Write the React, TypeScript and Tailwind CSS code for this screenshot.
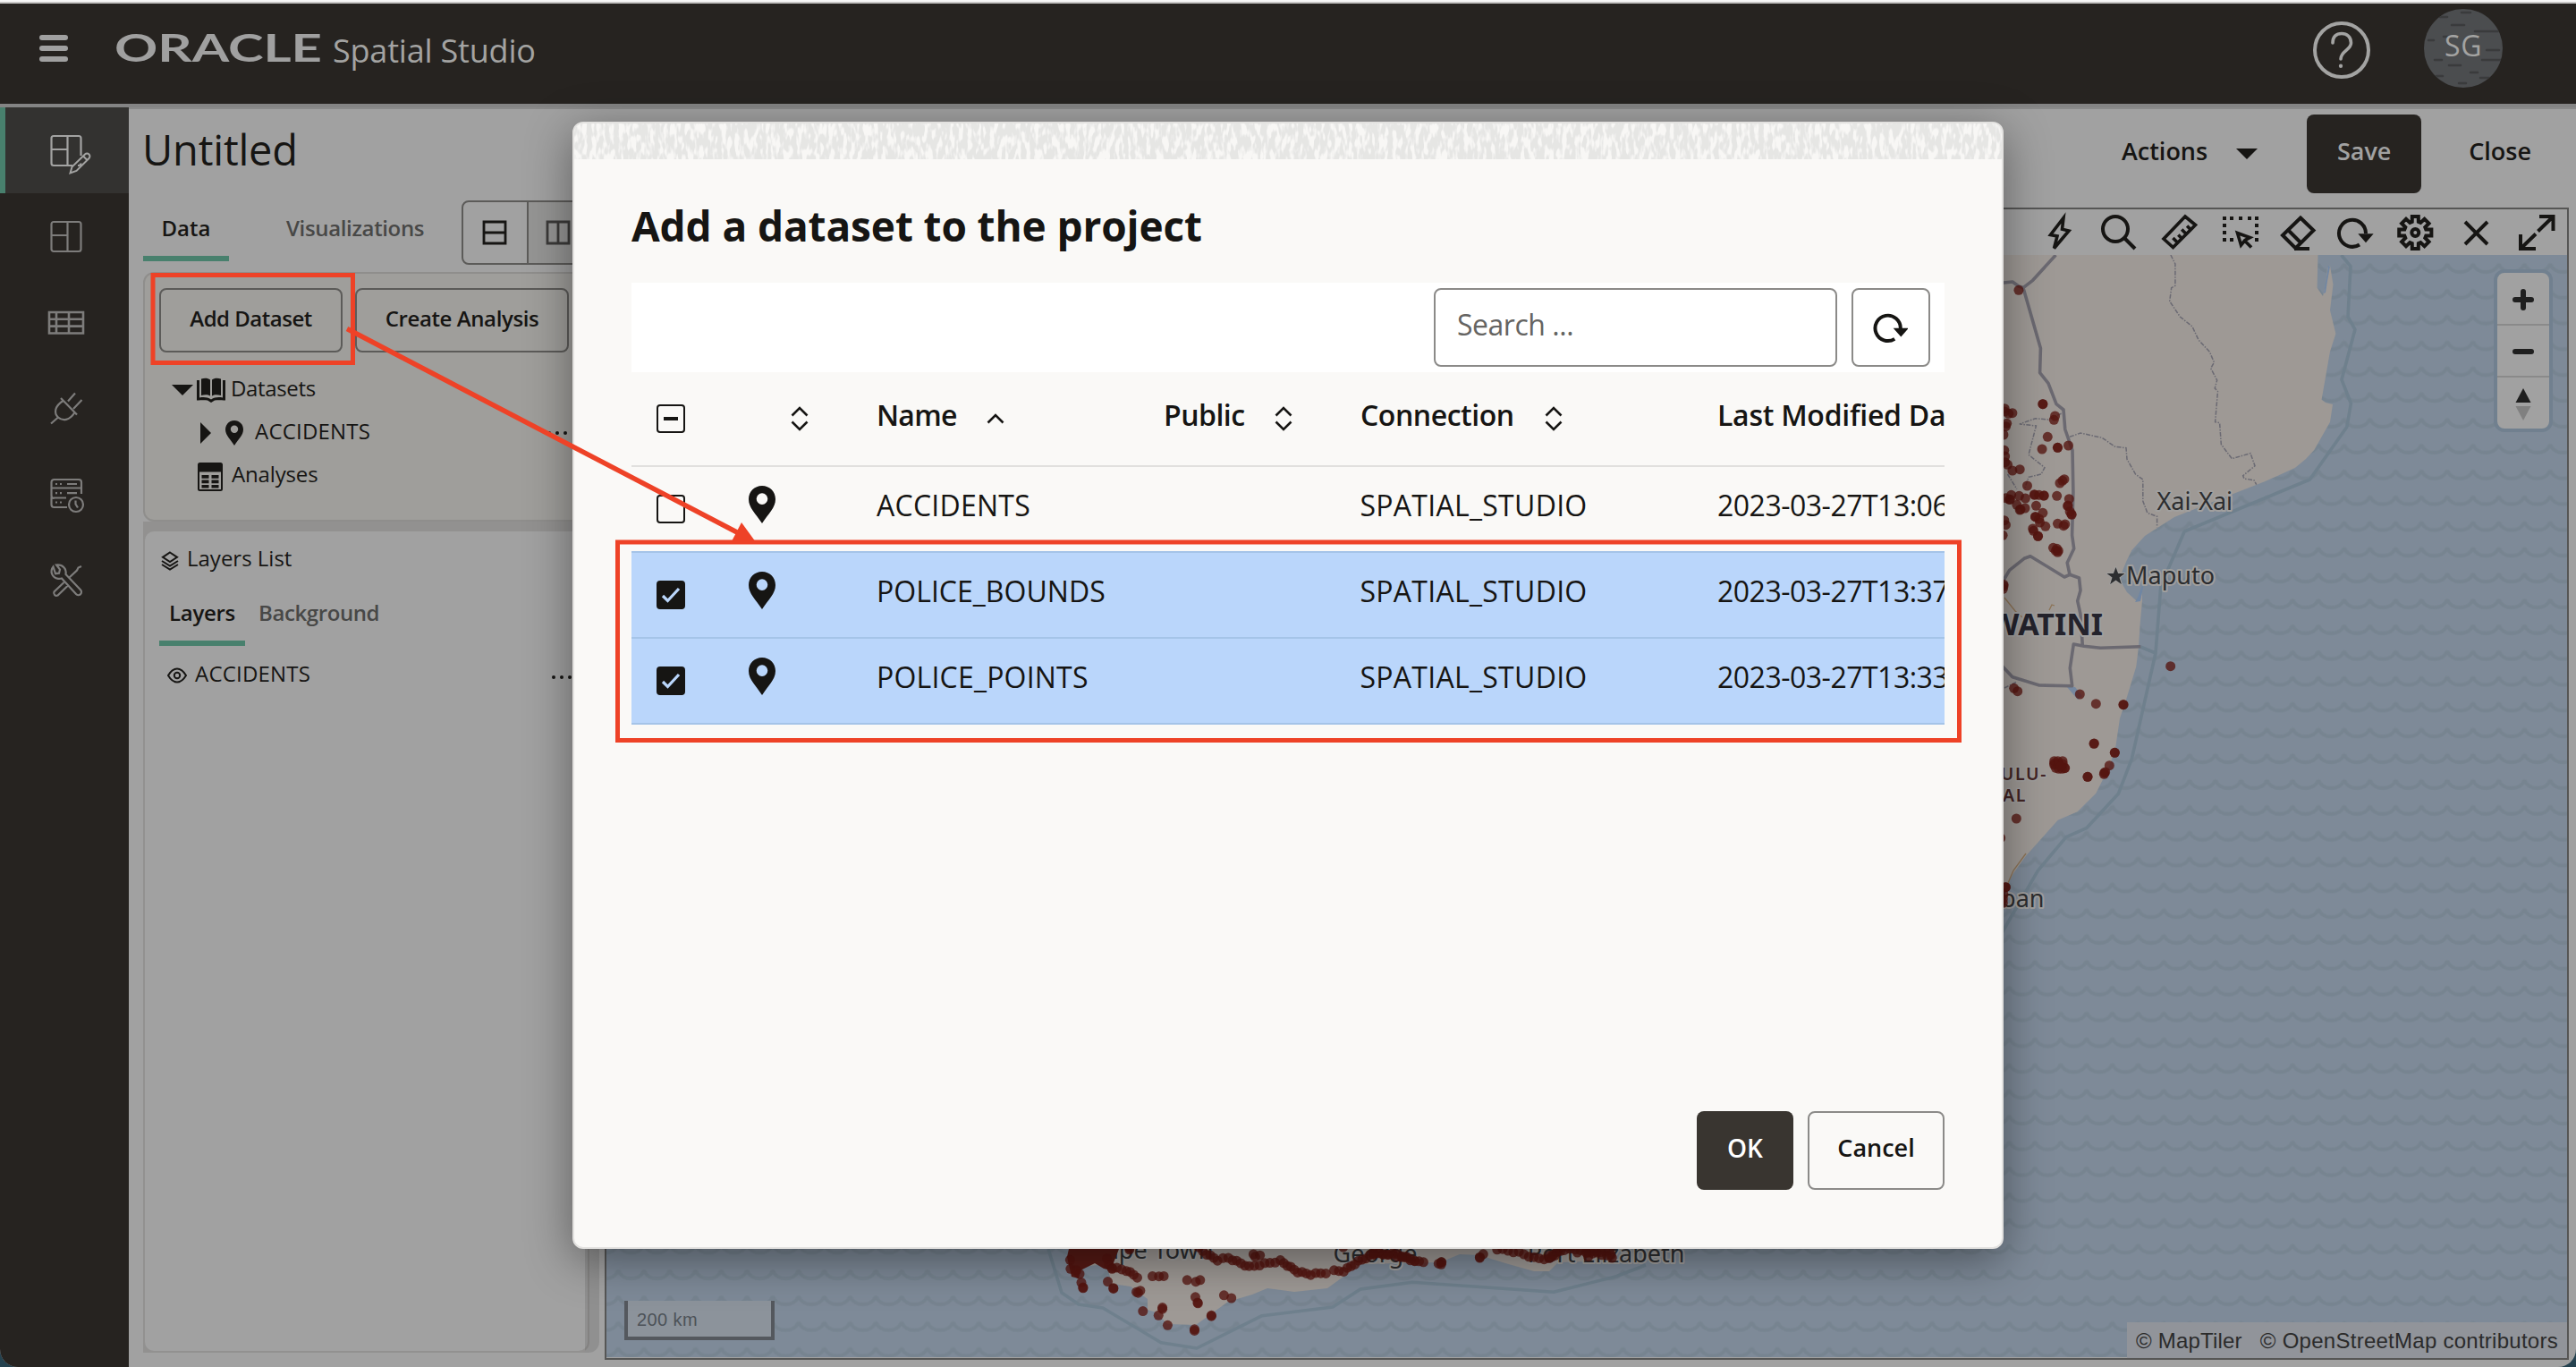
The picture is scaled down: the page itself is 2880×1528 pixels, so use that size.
import React from "react";
import type { ReactNode } from "react";

/* ---------- shared icons ---------- */

function Pin({ className }: { className: string }) {
  return (
    <svg viewBox="0 0 30 42" className={className} fill="currentColor">
      <path
        fillRule="evenodd"
        d="M15 0C6.5 0 0 6.6 0 15c0 9.500 7.500 15.500 15 27 7.500-11.500 15-17.500 15-27C30 6.600 23.500 0 15 0Zm0 8.300a6.200 6.200 0 1 1 0 12.600 6.200 6.200 0 0 1 0-12.600Z"
      />
    </svg>
  );
}

function Refresh({ className }: { className: string }) {
  return (
    <svg viewBox="0 0 40 36" className={className}>
      <path d="M25 30.500A15 15 0 1 1 32 18" fill="none" stroke="currentColor" strokeWidth="4.200" />
      <path d="M25 18.500h15L32.500 27Z" fill="currentColor" stroke="currentColor" strokeWidth="1.500" />
    </svg>
  );
}

function SortIcon() {
  return (
    <svg viewBox="0 0 20 28" className="h-[28px] w-[20px]" fill="none" stroke="currentColor" strokeWidth="2.600">
      <path d="M1.500 10.500 10 2l8.500 8.500M1.500 17.500 10 26l8.500-8.500" />
    </svg>
  );
}

/* ---------- side navigation ---------- */

function NavItem({ active, children }: { active?: boolean; children: ReactNode }) {
  return (
    <div
      className={
        active
          ? "flex h-24 items-center justify-center border-l-[6px] border-[#48806d] bg-[#333230] text-[#a3a3a2]"
          : "flex h-24 items-center justify-center border-l-[6px] border-transparent text-[#7d7c7b]"
      }
    >
      <svg viewBox="0 0 48 48" className="size-12 overflow-visible" fill="none" stroke="currentColor" strokeWidth="2.200">
        {children}
      </svg>
    </div>
  );
}

function SideNav() {
  return (
    <nav className="w-[144px] shrink-0 bg-[#262320]">
      <NavItem active>
        <path d="M39.500 30V10.500A2.500 2.500 0 0 0 37 8H9a2.500 2.500 0 0 0-2.500 2.500v28A2.500 2.500 0 0 0 9 41h21M36 41h1a2.500 2.500 0 0 0 2.500-2.500" />
        <path d="M24.500 8v33M6.500 23h18" />
        <path
          d="M27.500 49.500 29.500 42.500 44 28.500a3 3 0 0 1 4.500 4.500L34.500 47ZM42 30.500l4.500 4.500"
          strokeWidth="2"
        />
      </NavItem>
      <NavItem>
        <rect x="6.500" y="8" width="33" height="33" rx="2.500" />
        <path d="M24.500 8v33M6.500 23h18" />
      </NavItem>
      <NavItem>
        <path d="M4 13h38v23.500H4ZM4 20.800h38M4 28.600h38M12 13v23.500M26 13v23.500" strokeWidth="2.600" />
      </NavItem>
      <NavItem>
        <path d="M17 13 35 31.500M19.500 16C10 22 9 30 14 34.500c5 4.500 13 3.500 18.500-5.500M14 34.500 6 41.500M33 7.500l-8 9M40.500 15l-9.500 10" />
      </NavItem>
      <NavItem>
        <path d="M24 39H9.500a3 3 0 0 1-3-3v-7.500H23M40 24v-6.500H6.500V26a3 3 0 0 0 3 3M6.500 17.500V11a3 3 0 0 1 3-3H37a3 3 0 0 1 3 3v6.500M24 13h11M24 23.200h11" />
        <path d="M11 13h2M16 13h2M11 23.200h2M16 23.200h2M11 33.500h2M16 33.500h2" />
        <circle cx="34" cy="36" r="8" />
        <path d="M33.500 31.500v4l2.500 4" />
      </NavItem>
      <NavItem>
        <path d="M8.500 9.500C4.500 14.500 7 22 14 22.800c1.800.2 3 0 4-.300L34 40a3.400 3.400 0 0 0 5.200-4.500L22.500 18C23.500 12 19.500 6.800 12 7.500l4 5-1 4.200-4 .500ZM40 9l-3.500 1.500-1.500 3-9 8.500M20.500 27 9.500 37.500a3 3 0 0 0 4 4L25 30.500" />
      </NavItem>
    </nav>
  );
}

/* ---------- header ---------- */

function Header() {
  return (
    <header className="flex h-[116px] shrink-0 items-start border-b-4 border-[#848484] bg-[#262320] text-[#a3a3a2]">
      <div className="mt-[35px] ml-11 flex w-8 flex-col gap-[6px]">
        <span className="h-[6px] rounded-full bg-[#a0a0a0]" />
        <span className="h-[6px] rounded-full bg-[#a0a0a0]" />
        <span className="h-[6px] rounded-full bg-[#a0a0a0]" />
      </div>
      <svg viewBox="0 0 232 44" className="mt-[29px] ml-[52px] h-[44px] w-[232px] overflow-visible">
        <text
          x="0"
          y="36"
          textLength="232"
          lengthAdjust="spacingAndGlyphs"
          fill="#a0a0a0"
          className="font-['Lato'] text-[42px] font-bold"
        >
          ORACLE
        </text>
      </svg>
      <span className="mt-[27px] ml-[12px] text-[36px] leading-[52px] tracking-[-0.2px]">Spatial Studio</span>
      <div className="mt-5 ml-auto flex size-16 items-center justify-center rounded-full border-4 border-[#a3a3a2]">
        <svg viewBox="0 0 26 42" className="h-[42px] w-[26px]" fill="none" stroke="currentColor" strokeWidth="3.600" strokeLinecap="round">
          <path d="M3 13C3 6 7 2.500 13 2.500S23.500 6.500 23.500 13c0 8-11.500 9-11.500 18" />
          <path d="M12 38.500v.500" strokeWidth="4.200" />
        </svg>
      </div>
      <div className="relative mt-[6px] mr-[82px] ml-[60px] flex size-[88px] items-center justify-center overflow-hidden rounded-full bg-[#4b4d4f]">
        <svg viewBox="0 0 88 88" className="absolute inset-0" stroke="#3a3b3c" strokeWidth="2.500" strokeLinecap="round">
          <path d="M42 4h10M18 9h8M31 18h14M57 25h26M5 35h6M22 31h8M70 46h14M65 57h22M12 57h8M28 63h13M52 71h8M14 75h7M63 77h10M39 83h8" />
        </svg>
        <span className="relative pb-[7px] text-[32px] leading-none tracking-[0.500px]">SG</span>
      </div>
    </header>
  );
}

/* ---------- left column ---------- */

function Dots({ className }: { className: string }) {
  return (
    <span className={className}>
      <i className="size-1 rounded-full bg-[#161513]" />
      <i className="size-1 rounded-full bg-[#161513]" />
      <i className="size-1 rounded-full bg-[#161513]" />
    </span>
  );
}

function DataPanel() {
  return (
    <section className="h-[279px] w-[499px] rounded-xl border-2 border-[#8f8e8c] bg-[#9f9e9b]">
      <div className="mt-4 ml-4 flex gap-[14px] text-[24px] leading-8 font-semibold">
        <button className="flex h-[72px] w-[205px] items-center justify-center rounded-lg border-2 border-[#5c5b59] pb-[5px] tracking-[-0.500px]">
          Add Dataset
        </button>
        <button className="flex h-[72px] w-[239px] items-center justify-center rounded-lg border-2 border-[#5c5b59] pb-[5px] tracking-[-0.400px]">
          Create Analysis
        </button>
      </div>
      <ul className="mt-4 text-[24px] leading-[48px]">
        <li className="flex h-12 items-center pl-[30px]">
          <svg viewBox="0 0 24 12" className="mt-1 h-3 w-6" fill="currentColor">
            <path d="M0 0h24L12 12Z" />
          </svg>
          <svg viewBox="0 0 32 28" className="mt-1 ml-1 h-7 w-8">
            <path d="M5 1.500C9 0 12.500.5 15 2.500v18C12.500 19 9 19 5 20ZM27 1.500C23 0 19.500.5 17 2.500v18c2.500-1.500 6-1.500 10-.500ZM0 3h3v19.500c5-.8 9-.5 13 2 4-2.500 8-2.800 13-2V3h3v22.500c-6-.5-9-.5-12 0L16 28l-4-2.500c-3-.5-6-.5-12 0Z" fill="currentColor" />
          </svg>
          <span className="ml-[6px] -mt-[1px] tracking-[-0.350px]">Datasets</span>
        </li>
        <li className="flex h-12 items-center pl-[62px]">
          <svg viewBox="0 0 12 24" className="mt-1 h-6 w-3" fill="currentColor">
            <path d="M0 0v24L12 12Z" />
          </svg>
          <Pin className="mt-1 ml-4 h-7 w-5" />
          <span className="ml-[13px] -mt-[1px] tracking-[0.200px]">ACCIDENTS</span>
          <Dots className="mt-[3px] ml-auto mr-[23px] flex gap-[5px]" />
        </li>
        <li className="flex h-12 items-center pl-[59px]">
          <svg viewBox="0 0 28 32" className="mt-[5px] h-8 w-7">
            <rect x="1" y="1" width="26" height="30" rx="1.500" fill="none" stroke="currentColor" strokeWidth="2" />
            <path d="M1 1h26v9.500H1ZM4.500 14h8v3.800h-8ZM15.500 14h8v3.800h-8ZM4.500 19.500h8v3.800h-8ZM15.500 19.500h8v3.800h-8ZM4.500 25h8v3.500h-8ZM15.500 25h8v3.500h-8Z" fill="currentColor" />
          </svg>
          <span className="ml-[10px] -mt-[1px] tracking-[-0.150px]">Analyses</span>
        </li>
      </ul>
    </section>
  );
}

function LayersPanel() {
  return (
    <section className="h-[920px] w-[499px] rounded-xl border-2 border-[#929190] bg-[#a1a1a1] text-[24px]">
      <div className="flex h-[60px] items-center pl-[18px]">
        <svg viewBox="0 0 20 22" className="mt-[5px] h-[22px] w-5" fill="none" stroke="currentColor" strokeWidth="2">
          <path d="M10 1.500 18 6.800 10 12 2 6.800ZM1 11l9 5.500 9-5.500M1 15l9 5.500 9-5.500" />
        </svg>
        <span className="ml-[9px]">Layers List</span>
      </div>
      <div className="mt-[7px] ml-4 flex h-[61px] font-semibold">
        <div className="flex w-24 justify-center border-b-[6px] border-[#48806d] pt-[7px] leading-[34px] tracking-[-0.300px]">
          Layers
        </div>
        <div className="ml-[15px] pt-[7px] leading-[34px] tracking-[-0.400px] text-[#484847]">Background</div>
      </div>
      <div className="flex h-[62px] items-center pl-[25px]">
        <svg viewBox="0 0 22 18" className="mt-1 h-[18px] w-[22px]" fill="none" stroke="currentColor" strokeWidth="2">
          <path d="M1 9C4 4 7 1.500 11 1.500S18 4 21 9c-3 5-6 7.500-10 7.500S4 14 1 9Z" />
          <circle cx="11" cy="9" r="3.200" />
        </svg>
        <span className="ml-[9px] tracking-[0.200px]">ACCIDENTS</span>
        <Dots className="mt-2 ml-auto mr-[18px] flex gap-[5px]" />
      </div>
    </section>
  );
}

function LeftColumn() {
  return (
    <div className="w-[510px] shrink-0">
      <div className="flex h-[72px] text-[24px] font-semibold">
        <div className="flex h-[68px] w-24 justify-center border-b-[6px] border-[#48806d] pt-[14px] leading-[34px]">Data</div>
        <div className="ml-[64px] w-[156px] pt-[14px] leading-[34px] tracking-[-0.350px] text-[#484847]">Visualizations</div>
        <div className="ml-[40px] flex w-[148px] rounded-lg border-2 border-[#5c5b59]">
          <div className="flex w-[73px] items-center justify-center border-r-2 border-[#5c5b59]">
            <svg viewBox="0 0 28 28" className="mr-[2px] size-7" fill="none" stroke="currentColor" strokeWidth="2.800">
              <path d="M2 2h24v24H2ZM2 14h24" />
            </svg>
          </div>
          <div className="flex flex-1 items-center justify-center rounded-r-md bg-[#959594] text-[#3b3a39]">
            <svg viewBox="0 0 28 28" className="mr-[6px] size-7" fill="none" stroke="currentColor" strokeWidth="2.800">
              <path d="M2 2h24v24H2ZM14 2v24" />
            </svg>
          </div>
        </div>
      </div>
      <div className="mt-2 flex">
        <div className="w-[494px] bg-[#929190]">
          <div className="bg-[#a1a1a1]">
            <DataPanel />
          </div>
          <div className="h-[9px] bg-[#929190]" />
          <LayersPanel />
        </div>
        <div className="flex-1 rounded-br-xl bg-black/10" />
      </div>
    </div>
  );
}

/* ---------- map ---------- */

const NORTH_DOTS: [number, number][] = [
  [65, 283], [130, 665], [130, 665], [163, 705], [160, 718], [143, 775], [128, 816], [170, 811], [170, 811], [199, 804],
  [48, 695], [38, 697], [27, 680], [27, 690], [33, 730], [30, 740], [24, 768], [26, 820], [28, 840], [35, 868], [28, 860],
  [48, 888], [68, 884], [88, 939], [188, 917], [183, 922], [176, 930], [45, 970], [66, 973], [40, 985], [42, 985],
  [30, 980], [83, 981], [60, 1003], [70, 1018], [68, 1020], [82, 1014], [112, 1006], [107, 968], [108, 970], [133, 972],
  [133, 972], [120, 970], [168, 973], [201, 983], [197, 1007], [198, 1005], [203, 1025], [208, 1036], [207, 1034],
  [130, 1030], [110, 1043], [110, 1043], [120, 1050], [122, 1062], [137, 1075], [103, 1083], [105, 1090], [117, 1108],
  [117, 1108], [170, 1066], [190, 1068], [186, 1073], [26, 1055], [30, 1070], [22, 1105], [158, 1147], [168, 1150],
  [165, 1157], [172, 1157], [170, 1162],
];

const COAST_DOTS: [number, number][] = [
  [30, 45], [28, 55], [30, 40], [590, 314], [65, 388], [77, 398], [286, 408], [340, 440], [432, 443], [432, 443],
  [333, 574], [334, 573], [403, 604], [403, 604], [385, 647], [368, 672], [371, 669], [367, 676], [312, 685], [312, 685],
  [73, 825], [20, 890], [37, 1055], [37, 1055], [30, 1080], [28, 1095], [28, 1108], [200, 632], [200, 645], [205, 655],
  [215, 640], [215, 658], [228, 632], [229, 642], [235, 656], [226, 658], [212, 632], [200, 640], [236, 655], [222, 650],
];

const SOUTH_DOTS: [number, number][] = [
  [265, 682], [280, 680], [291, 677], [345, 695], [365, 698], [375, 690], [101, 703], [105, 717], [105, 717], [162, 700],
  [175, 719], [175, 719], [228, 735], [237, 728], [232, 733], [243, 799], [279, 811], [288, 787], [288, 787], [300, 844],
  [362, 860], [362, 860], [401, 811], [401, 811], [364, 752], [369, 768], [370, 768], [430, 746], [447, 753], [212, 588],
  [212, 588], [498, 606], [502, 612], [513, 612], [705, 582], [1028, 603], [1020, 618], [1020, 618], [925, 635],
  [931, 635], [931, 640], [932, 630], [890, 635], [1245, 600],
];

const SOUTH_CHAINS: [number, number][][] = [
  [[172, 650], [205, 660], [230, 682]],
  [[372, 585], [390, 605], [415, 625], [440, 618], [488, 648], [560, 628], [600, 665], [630, 673], [665, 668]],
  [[684, 662], [706, 662], [740, 630], [775, 605]],
  [[775, 605], [830, 605], [880, 632], [830, 612], [775, 600]],
  [[1060, 588], [1110, 600], [1145, 618], [1180, 622], [1200, 600]],
  [[1180, 610], [1215, 590], [1265, 590], [1270, 612], [1290, 600], [1325, 618], [1320, 595], [1265, 598]],
];

function alongChain(points: [number, number][], step: number): [number, number][] {
  const out: [number, number][] = [];
  for (let i = 0; i < points.length - 1; i++) {
    const [ax, ay] = points[i];
    const [bx, by] = points[i + 1];
    const n = Math.max(1, Math.round(Math.hypot(bx - ax, by - ay) / step));
    for (let k = 0; k < n; k++) out.push([ax + ((bx - ax) * k) / n, ay + ((by - ay) * k) / n]);
  }
  out.push(points[points.length - 1]);
  return out;
}

const ACCIDENT_POINTS: [number, number][] = [
  ...NORTH_DOTS.map(([x, y]): [number, number] => [2230 + x / 2.4123, 230 + y / 3]),
  ...COAST_DOTS.map(([x, y]): [number, number] => [2230 + x / 3, 640 + y / 3]),
  ...[...SOUTH_DOTS, ...SOUTH_CHAINS.flatMap((c) => alongChain(c, 11.5))].map(([x, y], i): [number, number] => [
    1160 + x / 2.063,
    1200 + y / 3 + (i % 3) * 0.8 - 0.8,
  ]),
];

const CAPE_CLUSTER: [number, number][] = [[75, 625], [76, 655], [90, 660], [97, 672], [165, 640], [172, 655], [160, 620]];

function MapCanvas() {
  return (
    <svg viewBox="678 285 2192 1232" className="block h-[1232px] w-[2192px]">
      <defs>
        <pattern id="waves" x="2304" y="290" width="28.800" height="28.850" patternUnits="userSpaceOnUse">
          <path d="M-2 3.500 0 5.500C5 17 23.800 17 28.800 5.500l2-2" fill="none" stroke="#768490" strokeWidth="3.200" opacity=".55" />
          <path d="M0 5C5 17 23.800 17 28.800 5" fill="none" stroke="#74828d" strokeWidth="4.500" opacity=".6" />
        </pattern>
      </defs>
      <rect x="678" y="285" width="2192" height="1232" fill="#7e8a98" />
      <rect x="678" y="285" width="2192" height="1232" fill="url(#waves)" />

      <path
        fill="#9e9995"
        d="M2200 285H2591.500L2590.600 321.700 2597 331 2600 318 2602 300 2605 297 2608.500 318 2605 346.700 2611.400 373 2605 393 2595.600 446.700 2600 450 2608 452 2605 471.700 2587.300 503 2578 513 2565.800 523 2532.600 538 2497.400 551.700 2431 578 2398 599 2383.400 615 2377 628 2373 638 2370 648 2378 662 2388 671 2393 670 2395 662 2395 671.700 2392.700 696.700 2391 723 2388.300 745 2377.700 780 2370 803 2365 836.700 2358.300 856.700 2343.300 886.700 2322.700 907.300 2300.700 916.700 2265 956.700 2250.700 976.700 2238 998 2200 1030Z"
      />
      <path d="M2387 673l6-1 3-16-1-2-5 14Z" fill="#7086a3" />
      <path d="M2598 328l3-18 2-13 2 1-3 16-2 13Z" fill="#7086a3" />
      <path d="M2311 768l9 0 8 10-5 4Z" fill="#7688a0" />
      <path
        fill="#9e9995"
        d="M1196 1380L1196 1420 1208 1416 1237 1413 1243 1435 1264 1438 1283 1452 1283 1464 1293 1467 1305 1480 1337 1481 1373 1455 1400 1447 1417 1440 1447 1444 1484 1440 1502 1427 1521 1413 1610 1411 1632 1402 1654 1403 1683 1412 1715 1421 1732 1421 1742 1411 1800 1409 1812 1380Z"
      />

      <g fill="none" stroke="#6f808d" strokeWidth="3.600" strokeLinejoin="round">
        <path d="M2617.600 285L2628 297.700 2625 354 2633 368.300 2618 424.300 2628.400 451 2623.800 477.300 2582.400 536 2442.200 594 2423.600 637 2415.700 656.700 2410 730 2383.300 848.300 2368.300 887.300 2332.700 925.700 2310 935.700 2278.300 973.300 2238 1043M2393 723l17 7" />
        <path d="M1172 1396L1187 1445 1206 1458 1233 1462 1298 1500.700 1338 1507 1411 1470.700 1490 1461 1521 1441 1579 1433.300 1737 1444.300 1807 1426.700 1840 1414" />
      </g>

      <g fill="none" stroke="#6b6971" strokeWidth="3.600" strokeLinejoin="round">
        <path d="M2298.400 285L2272.700 313.300 2262 321.700 2281.400 389.300 2280.600 416.700 2290 428.300 2299 451.700 2307 458 2308.800 480 2317 503.300 2317.900 550 2316.600 598.300 2318.700 613.300 2311.200 629 2314 642.300" />
        <path d="M2235 315l5 1 10-1 7 5 5 1.500M2238 652L2246.600 637.300 2263 624.300 2270 621.700 2308 645 2314 642.300 2324.500 646 2326 660 2322.700 671.700 2326 686.700 2328.300 721.700M2393.300 722.700L2348.300 724.300 2330 722.300 2318.300 720 2314.300 746.700 2316.700 766.700 2280 766 2250 756.700 2238 744" />
      </g>

      <g fill="none" stroke="#6b6a73" strokeWidth="1.500" strokeDasharray="5 1.500 1.500 1.500">
        <path d="M2426.900 285L2431.900 295 2431.900 319.300 2427.700 321.700 2425.700 336.700 2437.300 354 2451 365 2458 380 2470.400 393.300 2475.400 405 2471.700 411.700 2478.700 425 2476.200 434 2479.500 437.300 2476.600 471.700 2481.600 472.700 2483.300 496.700 2495.300 512.700 2516 506.700 2521 520.700 2507.700 531.700 2509 535 2520 536.700 2522.700 541.700" />
        <path d="M2314 488.300L2326 484 2350 489.300 2364.700 499.300 2377 500.700 2378 513.300 2387.500 530 2395.800 536 2395.800 560 2400.800 573.300 2411.600 577.300 2411.600 589.300" />
        <path d="M2304.600 462.300L2290 469 2275.600 467.700 2257.800 474 2276.400 476 2268 508.300 2286 522.700 2282 530 2268 533.300 2264 545M2244.500 530L2254.900 546.700M2241 769l14-7" />
      </g>
      <path d="M2241 668l12 15 8 7M2291 682l3-6 3 1M2265 954l-14 19-6 14" fill="none" stroke="#8d7457" strokeWidth="1.300" />

      <g
        className="font-['Noto_Sans'] text-[27px]"
        fill="#2c2d2f"
        stroke="#a09f9e"
        strokeWidth="4"
        strokeLinejoin="round"
        paintOrder="stroke"
      >
        <text x="2411.500" y="570">Xai-Xai</text>
        <text x="2377" y="653">Maputo</text>
        <text x="2285.500" y="1014" textAnchor="end">Durban</text>
        <text x="1356.500" y="1407" textAnchor="end">Cape Town</text>
        <text x="1490.500" y="1411">George</text>
        <text x="1883.500" y="1411" textAnchor="end">Port Elizabeth</text>
        <text x="2351" y="709.700" textAnchor="end" fill="#24232c" className="text-[34px] font-bold">
          ESWATINI
        </text>
        <g fill="#432524" strokeWidth="3" className="text-[19.500px] font-semibold tracking-[1.600px]">
          <text x="2289" y="871.700" textAnchor="end">KWAZULU-</text>
          <text x="2266" y="896" textAnchor="end">NATAL</text>
        </g>
        <path strokeWidth="2" d="M2365.500 634l2.600 7h7.400l-6 4.500 2.300 7.500-6.300-4.500-6.300 4.500 2.300-7.500-6-4.500h7.400Z" />
      </g>

      <g fill="#541410" fillOpacity=".78">
        <path d="M1195 1396h56l-7 18 6 8-16-4-10-6-16 8-2 9-8-2-5-22Z" fillOpacity="1" fill="#571a15" />
        {ACCIDENT_POINTS.map(([x, y], i) => (
          <circle key={i} cx={x} cy={y} r="5.500" />
        ))}
        {CAPE_CLUSTER.map(([x, y], i) => (
          <circle key={i} cx={1160 + x / 2.063} cy={1200 + y / 3} r="5.500" />
        ))}
      </g>
    </svg>
  );
}

const GEAR_PATH = (() => {
  const pts: string[] = [];
  for (let i = 0; i < 8; i++) {
    const a = (i * Math.PI) / 4 - Math.PI / 2;
    const corners: [number, number][] = [[12.500, -0.290], [18.400, -0.190], [18.400, 0.190], [12.500, 0.290]];
    corners.forEach(([r, d]) => pts.push(`${(21.3 + r * Math.cos(a + d)).toFixed(2)} ${(24 + r * Math.sin(a + d)).toFixed(2)}`));
  }
  return `M${pts.join("L")}Z`;
})();

function ToolIcon({ children }: { children: ReactNode }) {
  return (
    <svg viewBox="0 0 48 48" className="size-12" fill="none" stroke="currentColor" strokeWidth="4">
      {children}
    </svg>
  );
}

function MapToolbar() {
  return (
    <div className="flex h-[51px] items-start justify-end gap-[19px] bg-[#a1a1a1] pt-[2px] pr-[9px]">
      <ToolIcon>
        <path d="M30 7.500 15.500 26.500l7.500 1.500-3.500 13.500L36 22l-7.500-1.800Z" strokeWidth="3.600" />
      </ToolIcon>
      <ToolIcon>
        <circle cx="21" cy="20" r="14" />
        <path d="m31 30 12 12" />
      </ToolIcon>
      <ToolIcon>
        <path d="M32 6 43.500 15.500 18.500 40.500 8 31ZM23.400 34.900l-5-5M28.300 30.500l-4-4M33.200 25.500l-5-5M38.100 20.500l-4-4" strokeWidth="3.600" />
      </ToolIcon>
      <ToolIcon>
        <path
          d="M7 8h4M15 8h4M25 8h4M35 8h4M43 8h4M7 16h4M43 16h4M7 24h4M43 24h4M7 32h4M15 32h4M43 32h4"
        />
        <path d="M23.500 24.500 37.500 29.500l-5.500 3-4.500 5.500ZM31 32.500l8 8" strokeWidth="3.600" />
      </ToolIcon>
      <ToolIcon>
        <path d="M27 7.500 41.500 21.500 21.500 41.500 7 27ZM13 21 27.500 35.500M20 42h17" />
      </ToolIcon>
      <ToolIcon>
        <path d="M26 37.500A15 15 0 1 1 33 25" />
        <path d="M26 26h14l-7 8Z" fill="currentColor" strokeWidth="1.500" />
      </ToolIcon>
      <ToolIcon>
        <path d={GEAR_PATH} />
        <circle cx="21.300" cy="24" r="4" />
      </ToolIcon>
      <ToolIcon>
        <path d="m10 12 25 25M35 12 10 37" />
      </ToolIcon>
      <ToolIcon>
        <path d="M26 6h15.500v16M41 6.500 24.500 22.500M5 26v16h17M5.500 41.500 22 25.500" />
      </ToolIcon>
    </div>
  );
}

function MapView() {
  return (
    <div className="relative mt-2 ml-[6px] h-[1288px] w-[2196px] border-2 border-[#565655] bg-[#a1a1a1]">
      <MapToolbar />
      <MapCanvas />
      <div className="absolute top-[67px] right-[16px] flex h-[182px] w-[66px] flex-col rounded-xl border-4 border-[#71808f] bg-[#a1a1a1] text-[#1f1f1f]">
        <div className="flex h-[59px] items-center justify-center border-b-2 border-[#8a8a8a]">
          <svg viewBox="0 0 24 24" className="mt-[2px] size-6" stroke="currentColor" strokeWidth="6" strokeLinecap="round">
            <path d="M3 12h18M12 3v18" />
          </svg>
        </div>
        <div className="flex h-[58px] items-center justify-center border-b-2 border-[#8a8a8a]">
          <svg viewBox="0 0 24 24" className="mt-[2px] size-6" stroke="currentColor" strokeWidth="6" strokeLinecap="round">
            <path d="M3 12h18" />
          </svg>
        </div>
        <div className="flex flex-1 items-center justify-center">
          <svg viewBox="0 0 18 36" className="mt-[3px] h-9 w-[18px]">
            <path d="M9 0l8.500 16H.500Z" fill="currentColor" />
            <path d="M9 36l8.500-16H.500Z" fill="#808080" />
          </svg>
        </div>
      </div>
      <div className="absolute bottom-[20px] left-[20px] h-[44px] w-[168px] border-4 border-t-0 border-[#54585e] bg-[#8c939b] pt-[9px] pl-[10px] font-['Liberation_Sans'] text-[20px] leading-6 tracking-[0.400px] text-[#4c5258]">
        200 km
      </div>
      <div className="absolute right-0 bottom-0 flex h-[40px] w-[492px] gap-5 bg-[#91949a] pt-[6px] pl-[10px] font-['Liberation_Sans'] text-[24px] leading-[30px] whitespace-nowrap text-[#2b2b2b]">
        <span className="tracking-[0.200px]">© MapTiler</span>
        <span className="tracking-[0.260px]">© OpenStreetMap contributors</span>
      </div>
    </div>
  );
}

/* ---------- dialog ---------- */

type CheckState = "on" | "off" | "mixed";

function Checkbox({ state }: { state: CheckState }) {
  return (
    <svg viewBox="0 0 32 32" className="size-8" fill="none">
      <rect
        x="1"
        y="1"
        width="30"
        height="30"
        rx="3"
        stroke="#161513"
        strokeWidth="2"
        fill={state === "on" ? "#161513" : "none"}
      />
      {state === "mixed" && <path d="M8 16h16" stroke="#161513" strokeWidth="4" />}
      {state === "on" && <path d="m7 17 5.500 5.500L25 9" stroke="#bad6fb" strokeWidth="3.200" />}
    </svg>
  );
}

const ROWS = [
  { name: "ACCIDENTS", tracking: "tracking-[0.250px]", modified: "2023-03-27T13:06:12", on: false },
  { name: "POLICE_BOUNDS", tracking: "tracking-[0.020px]", modified: "2023-03-27T13:37:45", on: true },
  { name: "POLICE_POINTS", tracking: "tracking-[0.200px]", modified: "2023-03-27T13:33:20", on: true },
];

function DatasetTable() {
  return (
    <div className="overflow-hidden text-[32px] leading-[44px] whitespace-nowrap">
      <div className="grid h-[106px] grid-cols-[131px_143px_321px_219px_400px_400px] border-b-2 border-[#e1e0de] font-semibold">
        <div className="pt-9 pl-7">
          <Checkbox state="mixed" />
        </div>
        <div className="pt-[38px] pl-[47px]">
          <SortIcon />
        </div>
        <div className="flex pt-[26px]">
          <span className="tracking-[-0.700px]">Name</span>
          <svg viewBox="0 0 20 12" className="mt-[20px] ml-[33px] h-3 w-5" fill="none" stroke="currentColor" strokeWidth="2.600">
            <path d="M1.500 10.500 10 2l8.500 8.500" />
          </svg>
        </div>
        <div className="flex pt-[26px]">
          <span className="mr-[33px] tracking-[-0.500px]">Public</span>
          <span className="mt-[12px]">
            <SortIcon />
          </span>
        </div>
        <div className="flex pt-[26px] pl-px">
          <span className="mr-[34px] tracking-[-0.450px]">Connection</span>
          <span className="mt-[12px]">
            <SortIcon />
          </span>
        </div>
        <div className="pt-[26px] tracking-[-0.270px]">Last Modified Date</div>
      </div>
      {ROWS.map((row) => (
        <div
          key={row.name}
          className={
            row.on
              ? "grid h-24 grid-cols-[131px_143px_321px_219px_400px_400px] border-b-2 border-[#a5c4e8] bg-[#bad6fb]"
              : "grid h-24 grid-cols-[131px_143px_321px_219px_400px_400px] border-b-2 border-[#a5c4e8]"
          }
        >
          <div className="pt-[31px] pl-7">
            <Checkbox state={row.on ? "on" : "off"} />
          </div>
          <div className="pt-[21px]">
            <Pin className="h-[42px] w-[30px]" />
          </div>
          <div className={`pt-[21px] ${row.tracking}`}>{row.name}</div>
          <div />
          <div className="pt-[21px] pl-[0.500px] tracking-[0.280px]">SPATIAL_STUDIO</div>
          <div className="pt-[21px] tracking-[-0.500px]">{row.modified}</div>
        </div>
      ))}
    </div>
  );
}

function Dialog() {
  return (
    <div className="absolute top-[136px] left-[640px] flex h-[1260px] w-[1600px] flex-col rounded-xl border-2 border-[#e2e1df] bg-[#faf9f7] shadow-[0_12px_52px_rgba(0,0,0,0.42)]">
      <svg className="h-10 w-full shrink-0 rounded-t-[10px] bg-[#f8f7f5]">
        <filter id="grain" x="0" y="0" width="100%" height="100%" colorInterpolationFilters="sRGB">
          <feTurbulence type="fractalNoise" baseFrequency="0.2 0.07" numOctaves="2" seed="4" />
          <feColorMatrix values="0 0 0 0 .9  0 0 0 0 .9  0 0 0 0 .895  6 0 0 0 -2.300" />
        </filter>
        <rect width="100%" height="100%" filter="url(#grain)" />
      </svg>
      <div className="flex flex-1 flex-col px-16">
        <h2 className="mt-[42px] h-[96px] text-[46px] leading-[64px] font-bold tracking-[-0.120px]">Add a dataset to the project</h2>
        <div className="flex h-[100px] justify-end bg-white py-[6px] pr-4">
          <div className="flex h-[88px] w-[451px] items-center rounded-lg border-2 border-[#8b8a88] pb-[7px] pl-6 text-[32px] tracking-[-0.480px] text-[#656462]">
            Search ...
          </div>
          <button className="ml-4 flex h-[88px] w-[88px] items-center justify-center rounded-lg border-2 border-[#8b8a88]">
            <Refresh className="mt-[2px] mr-[2px] h-[34px] w-[39px]" />
          </button>
        </div>
        <DatasetTable />
        <div className="mt-auto mb-16 flex justify-end gap-4 text-[27px] font-semibold">
          <button className="h-[88px] w-[108px] rounded-lg bg-[#393530] pb-[7px] text-[28px] text-white">OK</button>
          <button className="h-[88px] w-[153px] rounded-lg border-2 border-[#8b8a88] pb-[6px]">Cancel</button>
        </div>
      </div>
    </div>
  );
}

/* ---------- callout drawn above the whole window ---------- */

function Callout() {
  return (
    <svg viewBox="0 0 2880 1528" className="pointer-events-none absolute inset-0" fill="none" stroke="#ee4227" strokeWidth="5">
      <rect x="171" y="307.500" width="223.500" height="98" />
      <rect x="690.500" y="606" width="1500" height="221.500" />
      <path d="M388 367.500 824 595" strokeWidth="5.500" />
      <path d="M829 584 817.500 606 845 606Z" fill="#ee4227" stroke="none" />
    </svg>
  );
}

export default function App() {
  return (
    <div className="relative h-[1528px] w-[2880px] overflow-hidden bg-[#25424f] font-['Open_Sans',sans-serif] text-[#161513]">
      <div className="flex h-full flex-col overflow-hidden rounded-b-[20px] bg-[#a1a1a1]">
        <div className="h-1 shrink-0 border-b-2 border-[#c6c5c4] bg-[#f6f6f6]" />
        <Header />
        <div className="flex flex-1">
          <SideNav />
          <main className="flex-1 border-t-2 border-[#8a8a8a] pl-4">
            <div className="flex h-[102px] items-start">
              <h1 className="mt-[13px] -ml-[1px] text-[47px] leading-[64px] tracking-[-0.200px]">Untitled</h1>
              <div className="mt-[6px] mr-[9px] ml-auto flex items-center text-[27px] font-semibold">
                <span className="pb-[6px]">Actions</span>
                <svg viewBox="0 0 24 12" className="ml-8 h-3 w-6" fill="currentColor">
                  <path d="M0 0h24L12 12Z" />
                </svg>
                <button className="ml-[55px] h-[88px] w-[128px] rounded-lg bg-[#262320] pb-[6px] text-[#a1a1a1]">Save</button>
                <button className="mr-[41px] ml-[53px] pb-[6px]">Close</button>
              </div>
            </div>
            <div className="flex">
              <LeftColumn />
              <MapView />
            </div>
          </main>
        </div>
      </div>
      <Dialog />
      <Callout />
    </div>
  );
}
